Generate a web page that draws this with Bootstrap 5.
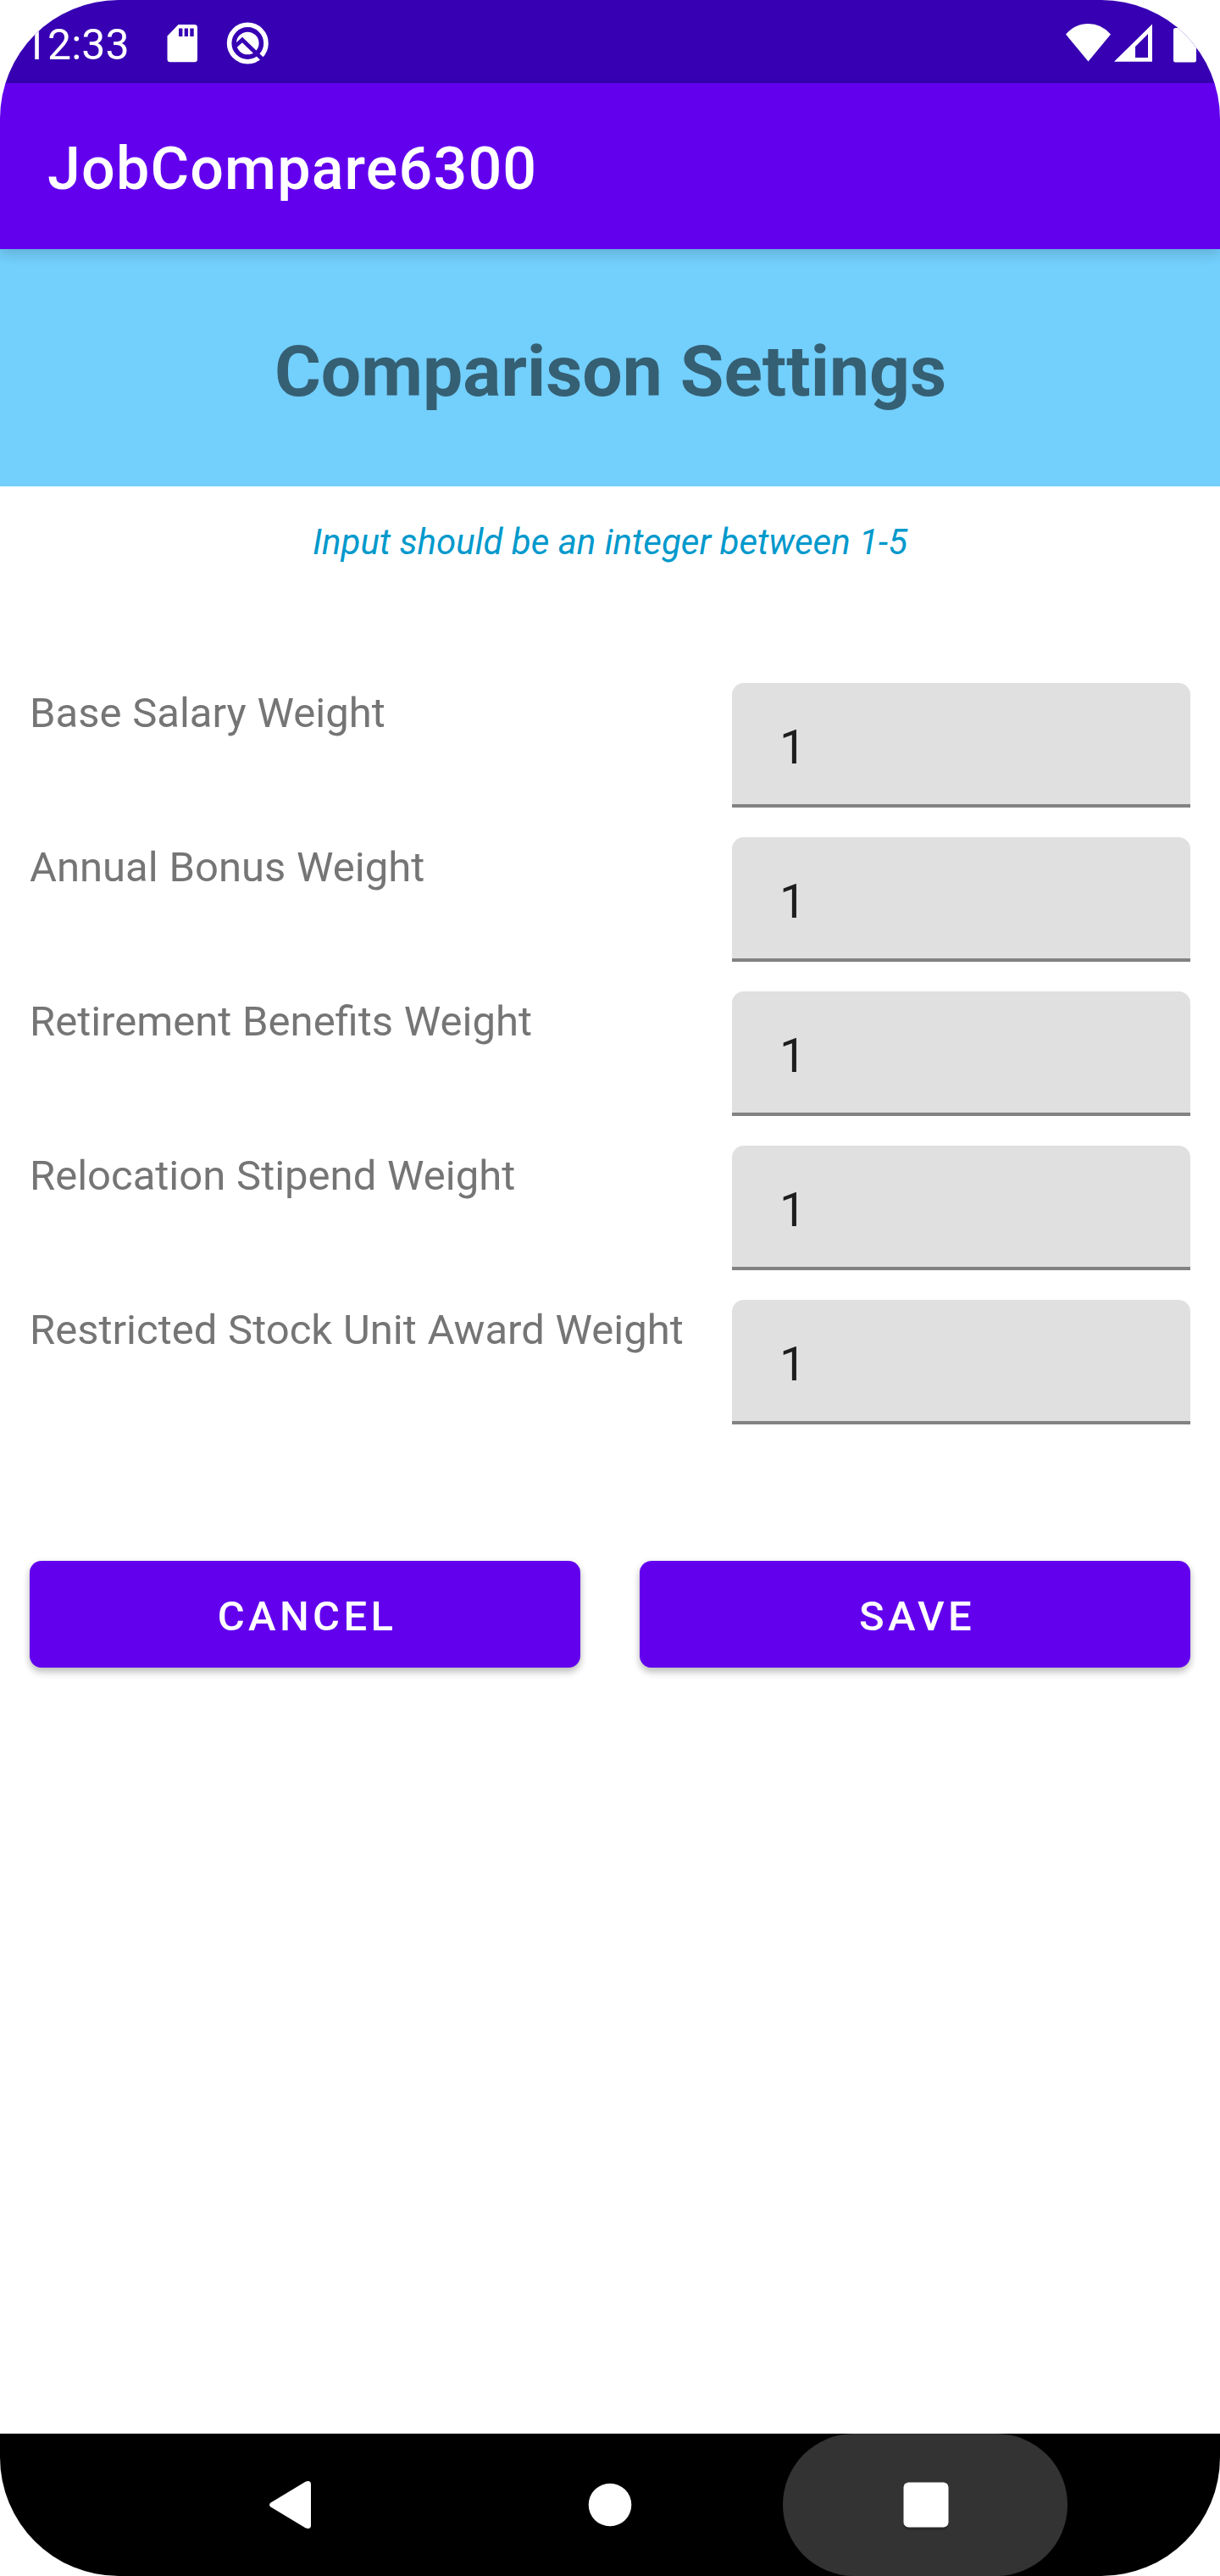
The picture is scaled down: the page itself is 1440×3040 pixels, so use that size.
<!DOCTYPE html>
<html lang="en">
<head>
<meta charset="utf-8">
<meta name="viewport" content="width=device-width, initial-scale=1">
<title>JobCompare6300</title>
<link href="https://cdn.jsdelivr.net/npm/bootstrap@5.3.0/dist/css/bootstrap.min.css" rel="stylesheet">
<style>
  body { font-family: Roboto, "Liberation Sans", sans-serif; background: #fff; }
  .screen { width: 1440px; height: 3040px; border-radius: 140px; }
  .status-bar { height: 98px; background: #3700b3; padding-left: 28px; padding-right: 28px; }
  .clock { font-size: 50px; line-height: 90px; padding-top: 8px; width: 169px; }
  .status-bar svg { display: block; }
  .app-bar { height: 196px; background: #6200ee; padding: 6px 56px 0; z-index: 1;
    box-shadow: 0 4px 14px rgba(0,0,0,.13), 0 8px 18px rgba(0,0,0,.04); }
  .app-title { font-size: 70px; line-height: 190px; font-weight: 500; letter-spacing: 1.15px; }
  .page-title { height: 280px; padding: 9px 0 0 1px; background: #73cffb; color: #355f73;
    font-size: 84px; line-height: 272px; font-weight: 700; }
  .hint { padding-top: 41px; font-size: 42px; line-height: 50px; color: #09c; margin-bottom: 141px; }
  .weights { gap: 35px; padding: 0 35px; }
  .weight-label { padding-top: 3px; font-size: 49px; line-height: 66px; color: #757575; word-spacing: .6px; }
  .weight-input { width: 541px; height: 147px; padding: 43px 56px 34px; font-size: 56px; line-height: 66px;
    color: #1e1e1e; background: #e0e0e0; border: 0; border-bottom: 4px solid #828282; border-radius: 14px 14px 0 0; }
  .actions { gap: 70px; padding: 0 35px; margin-top: 161px; }
  .btn-action { height: 126px; padding: 5px 0 0 5px; border: 0; border-radius: 14px; background: #6200ee; color: #fff;
    font-size: 49px; line-height: 121px; font-weight: 500; letter-spacing: .0893em;
    box-shadow: 0 6px 8px rgba(0,0,0,.18), 0 2px 8px rgba(0,0,0,.12); }
  .nav-bar { height: 168px; background: #000; padding: 0 180px; }
  .nav-key { width: 336px; height: 168px; border-radius: 84px; }
  .nav-key.pressed { background: #333; }
  .nav-bar svg { display: block; }
  .key-gap { width: 36px; }
</style>
</head>
<body>
<div class="screen d-flex flex-column overflow-hidden bg-white">
  <div class="status-bar d-flex flex-shrink-0 text-white">
    <div class="clock">12:33</div>
    <svg width="140" height="98" viewBox="197 0 140 98">
      <path fill="#fff" fill-rule="evenodd" d="M210.500 29H229.500Q233 29 233 32.500V69.800Q233 73.300 229.500 73.300H201Q197.500 73.300 197.500 69.800V42.500ZM211 33.500V43H215.400V33.500ZM217.700 33.500V43H222V33.500ZM224.300 33.500V43H228.700V33.500Z"/>
      <circle cx="292.300" cy="51" r="21.700" fill="none" stroke="#fff" stroke-width="5.600"/>
      <circle cx="292.300" cy="51" r="13.300" fill="#fff"/>
      <path d="M276 56L286 47L314 74" fill="none" stroke="#3700b3" stroke-width="4.800"/>
    </svg>
    <svg class="ms-auto" width="156" height="98" viewBox="1256 0 156 98">
      <path fill="#fff" d="M1258 40.500Q1269 28 1284.500 28T1311 40.500L1284.500 72.500Z"/>
      <path fill="#fff" fill-rule="evenodd" d="M1315 72.700L1360 28.500V72.700ZM1340 55V68H1355V40Z"/>
      <path fill="#fff" d="M1390 33V29H1407V33H1412V71Q1412 73.500 1409.500 73.500H1387.500Q1385 73.500 1385 71V35.500Q1385 33 1387.500 33Z"/>
    </svg>
  </div>
  <header class="app-bar position-relative flex-shrink-0 text-white">
    <div class="app-title">JobCompare6300</div>
  </header>
  <main class="flex-grow-1 d-flex flex-column">
    <h1 class="page-title text-center mb-0">Comparison Settings</h1>
    <p class="hint text-center fst-italic">Input should be an integer between 1-5</p>
    <form>
      <div class="weights d-flex flex-column">
        <div class="d-flex justify-content-between align-items-start">
          <label class="weight-label" for="w1">Base Salary Weight</label>
          <input id="w1" class="weight-input" type="text" value="1">
        </div>
        <div class="d-flex justify-content-between align-items-start">
          <label class="weight-label" for="w2">Annual Bonus Weight</label>
          <input id="w2" class="weight-input" type="text" value="1">
        </div>
        <div class="d-flex justify-content-between align-items-start">
          <label class="weight-label" for="w3">Retirement Benefits Weight</label>
          <input id="w3" class="weight-input" type="text" value="1">
        </div>
        <div class="d-flex justify-content-between align-items-start">
          <label class="weight-label" for="w4">Relocation Stipend Weight</label>
          <input id="w4" class="weight-input" type="text" value="1">
        </div>
        <div class="d-flex justify-content-between align-items-start">
          <label class="weight-label" for="w5">Restricted Stock Unit Award Weight</label>
          <input id="w5" class="weight-input" type="text" value="1">
        </div>
      </div>
      <div class="actions d-flex">
        <button type="button" class="btn btn-action flex-fill w-50">CANCEL</button>
        <button type="button" class="btn btn-action flex-fill w-50">SAVE</button>
      </div>
    </form>
  </main>
  <nav class="nav-bar d-flex flex-shrink-0">
    <div class="nav-key d-flex align-items-center justify-content-center">
      <svg width="60" height="60" viewBox="0 0 60 60"><path d="M1.500 27.500L42.500 2.700Q49 .500 49 6V54Q49 59.500 42.500 57.300L1.500 32.500Q-1.500 30 1.500 27.500Z" fill="#fff"/></svg>
    </div>
    <div class="key-gap"></div>
    <div class="nav-key d-flex align-items-center justify-content-center">
      <svg width="60" height="60" viewBox="0 0 60 60"><circle cx="30" cy="30" r="25.300" fill="#fff"/></svg>
    </div>
    <div class="key-gap"></div>
    <div class="nav-key pressed d-flex align-items-center justify-content-center">
      <svg width="70" height="70" viewBox="0 0 70 70"><rect x="10" y="12" width="52" height="53" rx="6" fill="#2a2a2a"/><rect x="9.500" y="8.500" width="53" height="53" rx="6" fill="#fff"/></svg>
    </div>
  </nav>
</div>
<script src="https://cdn.jsdelivr.net/npm/bootstrap@5.3.0/dist/js/bootstrap.bundle.min.js"></script>
</body>
</html>
